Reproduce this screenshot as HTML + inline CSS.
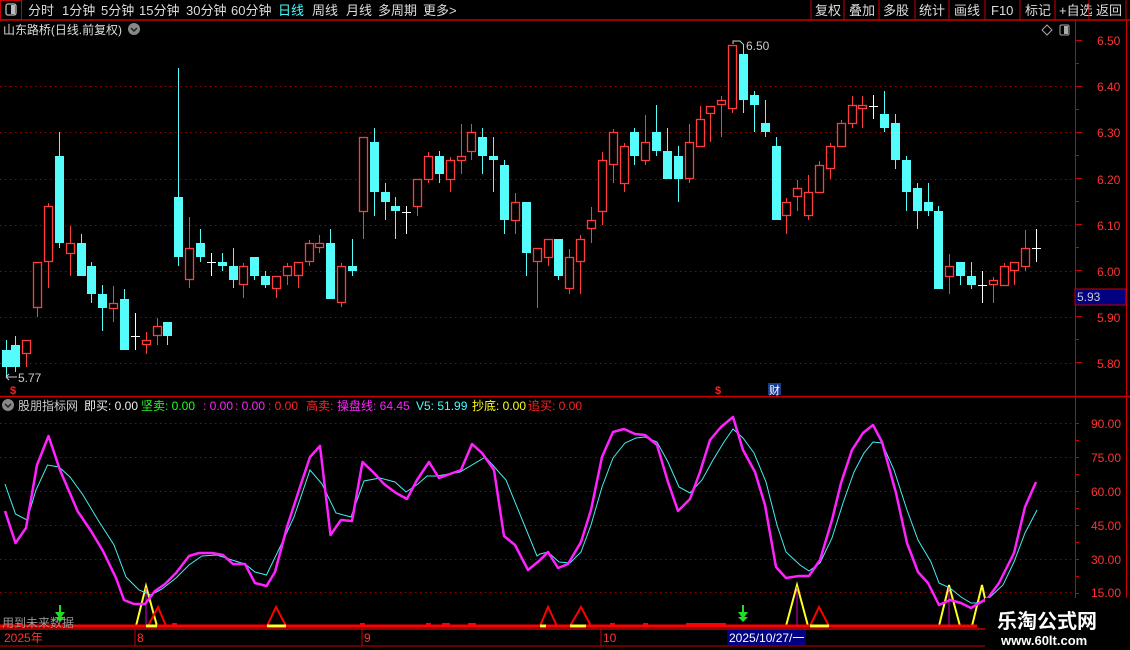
<!DOCTYPE html>
<html><head><meta charset="utf-8"><style>
html,body{margin:0;padding:0;background:#000;width:1130px;height:650px;overflow:hidden}
svg{display:block}
text{font-family:"Liberation Sans","Noto Sans CJK SC",sans-serif}
</style></head><body>
<svg id="s" width="1130" height="650" viewBox="0 0 1130 650" xmlns="http://www.w3.org/2000/svg">
<rect width="1130" height="650" fill="#000"/>
<rect x="0.5" y="0.5" width="21" height="19" fill="none" stroke="#c00" />
<rect x="6" y="4" width="10" height="11" rx="2" fill="none" stroke="#bbb" stroke-width="1.3"/>
<rect x="11" y="5" width="4" height="9" fill="#bbb"/>
<line x1="0" y1="20" x2="1130" y2="20" stroke="#c00" stroke-width="1.5"/>
<g font-size="13" fill="#ddd">
<text x="28" y="15">分时</text><text x="62" y="15">1分钟</text><text x="101" y="15">5分钟</text><text x="139" y="15">15分钟</text><text x="186" y="15">30分钟</text><text x="231" y="15">60分钟</text><text x="278" y="15" fill="#4ff">日线</text><text x="312" y="15">周线</text><text x="346" y="15">月线</text><text x="378" y="15">多周期</text><text x="423" y="15">更多</text><text x="449" y="15">&gt;</text>
<text x="815" y="15">复权</text><text x="849" y="15">叠加</text><text x="883" y="15">多股</text><text x="919" y="15">统计</text><text x="954" y="15">画线</text><text x="991" y="15">F10</text><text x="1025" y="15">标记</text><text x="1059" y="15">+自选</text><text x="1096" y="15">返回</text>
</g>
<g stroke="#c00" stroke-width="1"><line x1="811" y1="0" x2="811" y2="20"/><line x1="844" y1="0" x2="844" y2="20"/><line x1="879" y1="0" x2="879" y2="20"/><line x1="915" y1="0" x2="915" y2="20"/><line x1="949" y1="0" x2="949" y2="20"/><line x1="985" y1="0" x2="985" y2="20"/><line x1="1020" y1="0" x2="1020" y2="20"/><line x1="1055" y1="0" x2="1055" y2="20"/><line x1="1089" y1="0" x2="1089" y2="20"/><line x1="1126" y1="0" x2="1126" y2="20"/></g>
<text x="3" y="34" font-size="12" fill="#ddd" textLength="119" lengthAdjust="spacingAndGlyphs">山东路桥(日线.前复权)</text>
<circle cx="134" cy="29" r="6" fill="#888"/><path d="M131 28 L134 31 L137 28" stroke="#222" stroke-width="1.5" fill="none"/>
<path d="M1047 25 L1052 30 L1047 35 L1042 30Z" fill="none" stroke="#aaa"/>
<rect x="1060" y="25" width="9" height="10" rx="1.5" fill="none" stroke="#aaa"/><rect x="1064" y="26" width="4" height="8" fill="#aaa"/>
<line x1="1075.5" y1="20" x2="1075.5" y2="628" stroke="#c00"/>
<line x1="1126.5" y1="20" x2="1126.5" y2="650" stroke="#c00"/>
<g id="grid" stroke="#900" stroke-dasharray="1.5 3.5" stroke-width="1"></g>
<g font-size="12" fill="#f33">
<text x="1097" y="45">6.50</text><text x="1097" y="91">6.40</text><text x="1097" y="137">6.30</text><text x="1097" y="184">6.20</text><text x="1097" y="230">6.10</text><text x="1097" y="276">6.00</text><text x="1097" y="322">5.90</text><text x="1097" y="368">5.80</text>
</g>
<g id="ticks" stroke="#c00"></g>
<rect x="1075" y="289" width="51" height="16" fill="#000080" stroke="#c00"/>
<text x="1077" y="301" font-size="12" fill="#ccc">5.93</text>
<g id="candles"></g>
<text x="18" y="382" font-size="12" fill="#ccc">5.77</text><path d="M6 377 H17 M6 377 L9 374 M6 377 L9 380" stroke="#ccc" fill="none"/>
<text x="746" y="50" font-size="12" fill="#ccc">6.50</text><path d="M733 44 V41 H740 L744 45" stroke="#ccc" fill="none"/>
<text x="10" y="394" font-size="11" fill="#f22" font-weight="bold">$</text>
<text x="715" y="394" font-size="11" fill="#f22" font-weight="bold">$</text>
<rect x="768" y="383" width="13" height="12" fill="#1a3a8a"/><text x="769" y="394" font-size="11" fill="#fff">财</text>
<line x1="0" y1="396.5" x2="1130" y2="396.5" stroke="#c00" stroke-width="1.5"/>
<circle cx="8" cy="405" r="6" fill="#888"/><path d="M5 404 L8 407 L11 404" stroke="#222" stroke-width="1.5" fill="none"/>
<g font-size="12">
<text x="18" y="410" fill="#ccc">股朋指标网</text>
<text x="84" y="410" fill="#eee">即买: 0.00</text>
<text x="141" y="410" fill="#2f2">坚卖: 0.00</text>
<text x="203" y="410" fill="#f2f">: 0.00</text>
<text x="235" y="410" fill="#f2f">: 0.00</text>
<text x="268" y="410" fill="#f22">: 0.00</text>
<text x="306" y="410" fill="#f22">高卖:</text>
<text x="337" y="410" fill="#f2f">操盘线: 64.45</text>
<text x="416" y="410" fill="#4ff">V5: 51.99</text>
<text x="472" y="410" fill="#ff2">抄底: 0.00</text>
<text x="528" y="410" fill="#f22">追买: 0.00</text>
</g>
<g id="grid2" stroke="#900" stroke-dasharray="1.5 3.5"></g>
<g font-size="12" fill="#f33">
<text x="1091" y="428">90.00</text><text x="1091" y="462">75.00</text><text x="1091" y="496">60.00</text><text x="1091" y="530">45.00</text><text x="1091" y="564">30.00</text><text x="1091" y="597">15.00</text>
</g>
<g stroke-width="2" fill="none">
<path d="M136 626 L146 586 L157 626" stroke="#ff2"/>
<path d="M786 626 L797 585 L808 626" stroke="#ff2"/>
<path d="M939 626 L949 585 L960 626" stroke="#ff2"/>
<path d="M972 626 L982 585 L991 626" stroke="#ff2"/>
<path d="M148 626 L158 607 L166 626" stroke="#f00"/>
<path d="M267 626 L276 607 L286 626" stroke="#f00"/>
<path d="M540 626 L548 607 L557 626" stroke="#f00"/>
<path d="M570 626 L581 607 L591 626" stroke="#f00"/>
<path d="M810 626 L819 607 L829 626" stroke="#f00"/>
</g>
<g stroke="#d0d" stroke-width="1"><line x1="146" y1="588" x2="146" y2="626"/><line x1="797" y1="587" x2="797" y2="626"/><line x1="949" y1="587" x2="949" y2="626"/></g>
<polyline fill="none" stroke="#4ee" stroke-width="1" points="5,484 15.5,514 27,520 36,490 47.5,465 59,467 70,477 83,495 98,520 114,545 126,577 139,590 151,595 162,589 176,578 189,565 202,556 217,555 232,560 245,564 255,572 266.5,575 281,545 294,517 310,470 322,484 336,513 351,517 364,481 380,478 395,482 406,492 418,484 427,476 437,476 460,472 485.5,457 506,480 537,556 540,554 548,552 559,562 570,563 581,552 591,525 602,487 613,458 625,443 636,438 645,437 657,442 668,462 679,487 690,493 702,480 713,460 724,442 733,429 743,438 754,453 766,482 777,525 786,552 800,565 809,571 820,563 832,538 843,503 854,472 864,453 873,442 882,443 894,470 907,510 918,540 931,562 939,583 950,588 961,597 971,603 976,603 988,599 1003,585 1014,562 1025,533 1037,510"/>
<polyline fill="none" stroke="#f2f" stroke-width="2.5" stroke-linejoin="round" points="5,511 15.5,543 26,528 37,465 48.5,436 60,470 77.5,511 91,531 103,551 116,578 124,600 134,604 145,604 155,591 165,584 176,573 189,556 199,553 212,553 223,555 233,564 245,564 255,583 266.5,586 275,572 287,527 300,487 310,457 320,446 330.5,535 341,520 352,521 362.5,462 374,473 384,484 396,493 407,499 417,480 429,462 439,478 450,474 461,470 472,444 482,453 494,470 504,536 515,545 528,570 539,561 548,552 558,568 568,564 581,542 591,510 602,457 613,432 624,429 635,434 645,435 657,445 668,482 678,511 690,499 700,472 710,440 721,427 733,417 743,450 755,472 765,505 776,567 786,578 799,576 809,576 820,560 832,520 841,483 852,450 863,433 873,425 882,442 896,493 907,543 918,572 928,583 939,605 950,600 961,603 971,608 976,605 988,598 999,583 1014,553 1025,507 1036,482"/>
<line x1="0" y1="626" x2="977" y2="626" stroke="#f00" stroke-width="3"/>
<g stroke="#ff2" stroke-width="3"><line x1="146" y1="626" x2="157" y2="626"/><line x1="267" y1="626" x2="286" y2="626"/><line x1="540" y1="626" x2="546" y2="626"/><line x1="570" y1="626" x2="586" y2="626"/><line x1="810" y1="626" x2="829" y2="626"/></g>
<g fill="#f00"><rect x="17" y="623" width="5" height="2"/><rect x="172" y="623" width="5" height="2"/><rect x="360" y="623" width="5" height="2"/><rect x="426" y="623" width="5" height="2"/><rect x="442" y="623" width="8" height="2"/><rect x="468" y="623" width="8" height="2"/><rect x="610" y="623" width="5" height="2"/><rect x="643" y="623" width="5" height="2"/><rect x="686" y="623" width="40" height="2"/></g>
<g fill="#2d2"><rect x="59" y="605" width="2" height="9"/><path d="M55 612 L60 619 L65 612Z"/><path d="M55 617 L60 622 L65 617Z"/>
<rect x="742" y="605" width="2" height="9"/><path d="M738 612 L743 619 L748 612Z"/><path d="M738 617 L743 622 L748 617Z"/></g>
<text x="2" y="627" font-size="12" fill="#999">用到未来数据</text>
<line x1="0" y1="629" x2="1130" y2="629" stroke="#c00" stroke-width="1.5"/>
<line x1="0" y1="646" x2="1130" y2="646" stroke="#c00"/>
<g stroke="#c00"><line x1="135" y1="629" x2="135" y2="646"/><line x1="362" y1="629" x2="362" y2="646"/><line x1="601" y1="629" x2="601" y2="646"/></g>
<g font-size="12" fill="#f33"><text x="4" y="642">2025年</text><text x="137" y="642">8</text><text x="364" y="642">9</text><text x="603" y="642">10</text></g>
<rect x="727" y="630" width="79" height="15" fill="#000080"/><text x="729" y="642" font-size="12" fill="#fff">2025/10/27/一</text>
<rect x="985" y="598" width="145" height="52" fill="#000"/>
<text x="997" y="628" font-size="20" font-weight="bold" fill="#fff">乐淘公式网</text>
<text x="1001" y="645" font-size="13" font-weight="bold" fill="#fff" font-family="Liberation Serif,serif">www.60lt.com</text>
</svg>
<script>
var NS="http://www.w3.org/2000/svg";
function el(p,t,a){var e=document.createElementNS(NS,t);for(var k in a)e.setAttribute(k,a[k]);p.appendChild(e);return e;}
var g=document.getElementById('grid');
[86,132,179,225,271,317,363].forEach(function(y){el(g,'line',{x1:0,x2:1075,y1:y+.5,y2:y+.5});});
var g2=document.getElementById('grid2');
[423,457,491,525,559,592].forEach(function(y){el(g2,'line',{x1:0,x2:1075,y1:y+.5,y2:y+.5});});
var tk=document.getElementById('ticks');
for(var y=40;y<380;y+=23){el(tk,'line',{x1:1075,x2:(y-40)%46==0?1082:1079,y1:y+.5,y2:y+.5});}
for(var y=423;y<620;y+=17){el(tk,'line',{x1:1075,x2:1079,y1:y+.5,y2:y+.5});}
var C=[[5.6,350,367,340,377,'c'],[15.3,345,367,336,372,'c'],[26.3,340,354,340,367,'r'],[37.3,262,308,262,317,'r'],[48.3,206,262,203,288,'r'],[59.3,156,243,132,248,'c'],[70.3,243,254,226,276,'r'],[81.3,243,276,234,276,'c'],[91.3,266,294,262,303,'c'],[102.3,294,308,285,331,'c'],[113.3,303,309,286,322,'r'],[124.3,299,350,289,350,'c'],[135.3,336,336,313,350,'w'],[146.3,340,345,332,354,'r'],[157.3,326,336,318,345,'r'],[167.3,322,336,322,345,'c'],[178.3,197,257,68,266,'c'],[189.3,248,280,217,288,'r'],[200.3,243,257,229,262,'c'],[211.3,262,262,253,276,'w'],[222.3,262,266,253,271,'c'],[233.3,266,280,248,288,'c'],[243.3,266,285,263,298,'r'],[254.3,257,276,257,280,'c'],[265.3,276,285,271,288,'c'],[276.3,276,289,276,298,'r'],[287.3,266,276,263,285,'r'],[298.3,262,276,262,288,'r'],[309.3,243,262,240,266,'r'],[319.3,243,248,235,253,'r'],[330.3,243,299,229,299,'c'],[341.3,266,303,263,307,'r'],[352.3,266,271,239,276,'c'],
[363.3,137,212,137,239,'r'],[374.3,142,192,128,216,'c'],[385.3,192,202,183,220,'c'],[395.3,206,211,197,239,'c'],[406.3,212,212,206,234,'w'],[417.3,179,207,179,216,'r'],[428.3,156,180,152,183,'r'],[439.3,156,174,151,183,'c'],[450.3,160,180,157,192,'r'],[461.3,156,161,124,174,'r'],[471.3,132,152,124,160,'r'],[482.3,137,156,128,174,'c'],[493.3,156,160,137,192,'c'],[504.3,165,220,160,234,'c'],[515.3,202,221,193,234,'r'],[526.3,202,253,202,276,'c'],[537.3,248,262,248,308,'r'],[548.3,239,258,239,266,'r'],[558.3,239,276,239,280,'c'],[569.3,257,289,249,294,'r'],[580.3,239,262,235,294,'r'],[591.3,220,229,207,243,'r'],[602.3,160,212,152,225,'r'],[613.3,132,165,129,183,'r'],[624.3,146,184,143,192,'r'],[634.3,132,156,128,165,'c'],[645.3,142,161,115,165,'r'],[656.3,132,151,105,156,'c'],[667.3,151,179,128,179,'c'],[678.3,156,179,146,202,'c'],[689.3,142,179,124,183,'r'],[700.3,119,147,106,147,'r'],
[710.3,106,114,106,142,'r'],[721.3,100,105,96,137,'r'],[732.3,45,109,45,113,'r'],[743.3,54,100,45,113,'c'],[754.3,95,105,91,132,'c'],[765.3,123,132,100,137,'c'],[776.3,146,220,137,220,'c'],[786.3,202,216,198,234,'r'],[797.3,188,197,180,211,'r'],[808.3,192,216,175,220,'r'],[819.3,165,193,161,193,'r'],[830.3,146,169,143,179,'r'],[841.3,123,147,120,147,'r'],[852.3,105,124,96,128,'r'],[862.3,105,109,96,128,'r'],[873.3,106,106,95,119,'w'],[884.3,114,128,91,132,'c'],[895.3,123,160,114,169,'c'],[906.3,160,192,156,211,'c'],[917.3,188,211,183,229,'c'],[928.3,202,211,183,216,'c'],[938.3,211,289,206,289,'c'],[949.3,266,277,254,294,'r'],[960.3,262,276,262,285,'c'],[971.3,276,285,262,289,'c'],[982.3,285,285,271,303,'w'],[993.3,280,285,277,303,'r'],[1004.3,266,286,263,286,'r'],[1014.3,262,271,262,285,'r'],[1025.3,248,267,230,271,'r'],[1036.3,248,248,229,262,'w']];
var cg=document.getElementById('candles');
C.forEach(function(c){var x=Math.round(c[0])+.5,t=c[1],b=c[2],col=c[5];
 var clr=col=='c'?'#54fcfc':col=='r'?'#ff3c3c':'#fff';
 if(col=='w'){el(cg,'line',{x1:x,x2:x,y1:c[3],y2:c[4],stroke:clr});el(cg,'line',{x1:x-4.5,x2:x+4.5,y1:t+.5,y2:t+.5,stroke:clr});return;}
 el(cg,'line',{x1:x,x2:x,y1:c[3],y2:t,stroke:clr});
 el(cg,'line',{x1:x,x2:x,y1:b,y2:c[4],stroke:clr});
 if(col=='c'){el(cg,'rect',{x:x-4.5,y:t,width:9,height:Math.max(b-t,1.5),fill:clr});}
 else{el(cg,'rect',{x:x-4,y:t+.5,width:8,height:Math.max(b-t-1,1),fill:'#000',stroke:clr,'stroke-width':1.3});}
});
</script>
</body></html>
